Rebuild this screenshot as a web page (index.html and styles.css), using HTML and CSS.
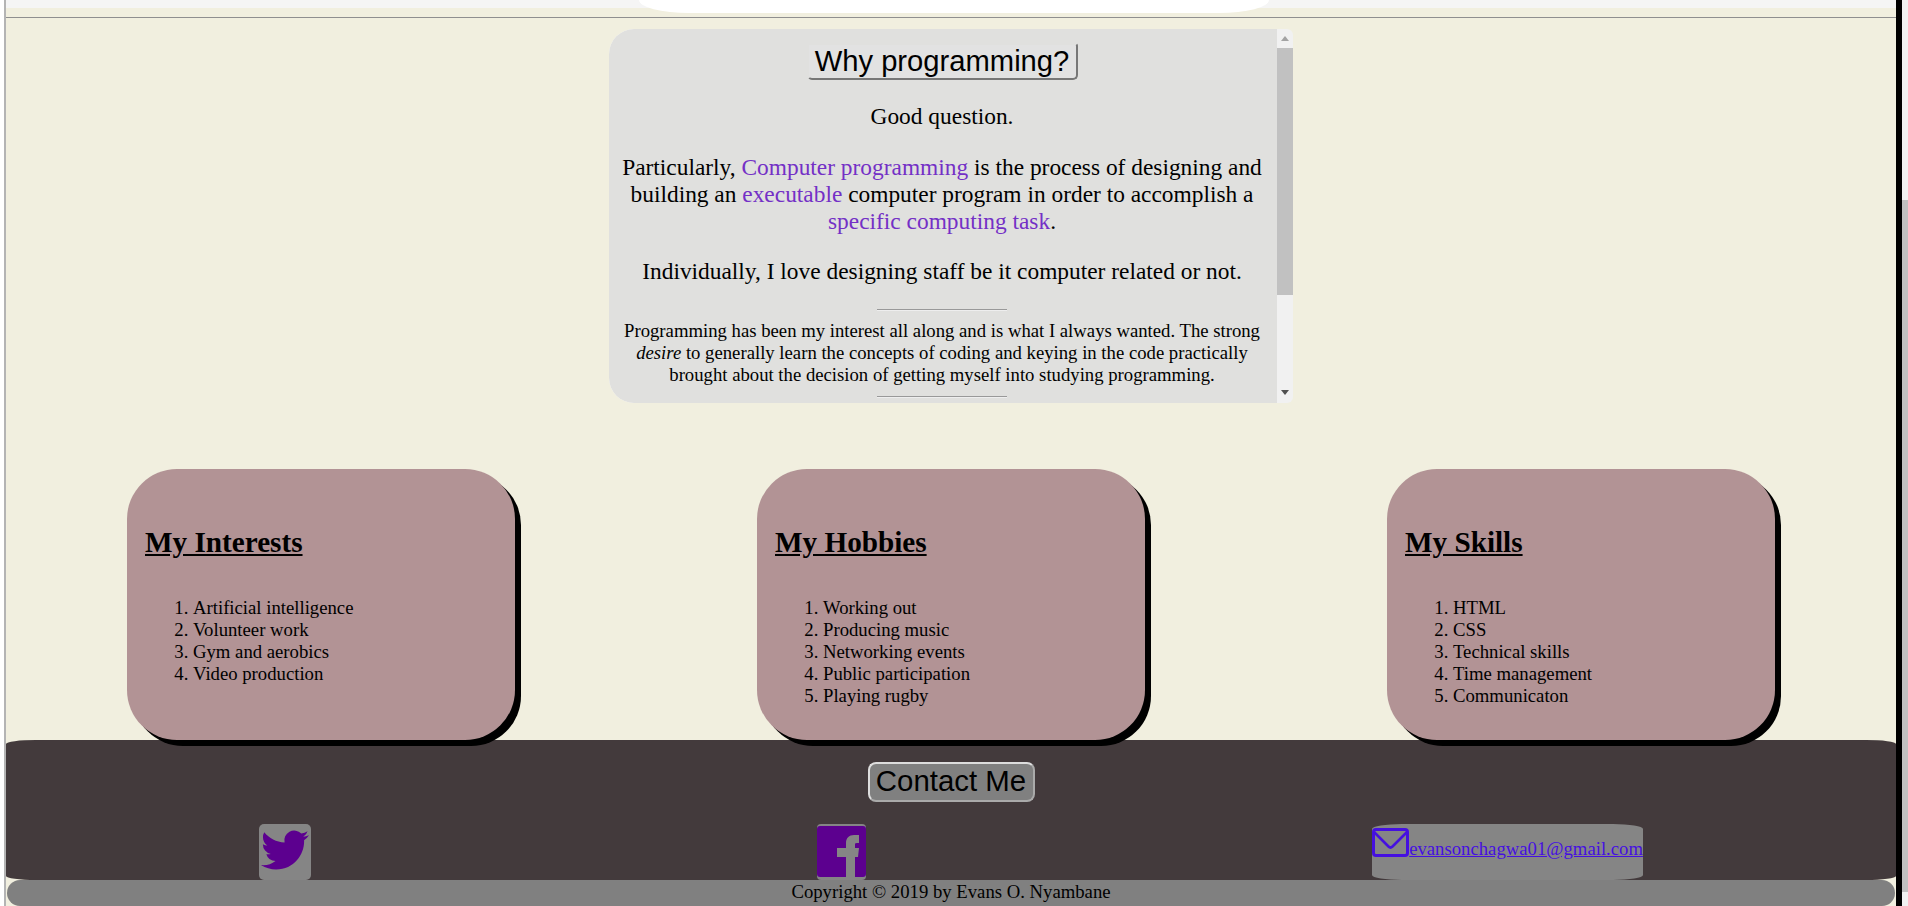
FILE: index.html
```html
<!DOCTYPE html>
<html lang="en">
<head>
  <meta charset="UTF-8">
  <meta name="viewport" content="width=device-width, initial-scale=1.0">
  <title>Evans O. Nyambane</title>
  <link rel="stylesheet" href="styles.css">
</head>
<body>
  <div id="page">
    <div class="top-bar">
      <div class="top-pill"></div>
    </div>
    <hr class="top-rule">

    <div id="why">
      <div class="why-content">
        <div class="why-title"><button class="why-button">Why programming?</button></div>
        <p>Good question.</p>
        <p>Particularly, <a href="#why">Computer programming</a> is the process of designing and building an <a href="#why">executable</a> computer program in order to accomplish a <a href="#why">specific computing task</a>.</p>
        <p>Individually, I love designing staff be it computer related or not.</p>
        <hr class="why-rule">
        <p class="why-small">Programming has been my interest all along and is what I always wanted. The strong <em>desire</em> to generally learn the concepts of coding and keying in the code practically brought about the decision of getting myself into studying programming.</p>
        <hr class="why-rule why-rule-last">
      </div>
      <!-- scrollbar of the box, headless chrome does not paint one -->
      <div class="why-bar">
        <svg class="why-arrow" width="8" height="5" viewBox="0 0 8 5"><path d="M4 0L8 5H0Z" fill="#a3a3a3"/></svg>
        <div class="why-thumb"></div>
        <svg class="why-arrow why-arrow-down" width="8" height="5" viewBox="0 0 8 5"><path d="M0 0H8L4 5Z" fill="#505050"/></svg>
      </div>
    </div>

    <div class="cards">
      <div class="card">
        <h2>My Interests</h2>
        <ol>
          <li>Artificial intelligence</li>
          <li>Volunteer work</li>
          <li>Gym and aerobics</li>
          <li>Video production</li>
        </ol>
      </div>
      <div class="card">
        <h2>My Hobbies</h2>
        <ol>
          <li>Working out</li>
          <li>Producing music</li>
          <li>Networking events</li>
          <li>Public participation</li>
          <li>Playing rugby</li>
        </ol>
      </div>
      <div class="card">
        <h2>My Skills</h2>
        <ol>
          <li>HTML</li>
          <li>CSS</li>
          <li>Technical skills</li>
          <li>Time management</li>
          <li>Communicaton</li>
        </ol>
      </div>
    </div>

    <footer>
      <div class="contact-row"><button class="contact-button">Contact Me</button></div>
      <div class="socials">
        <a class="tile tile-twitter" href="#why" aria-label="Twitter">
          <svg width="48" height="48" viewBox="0 0 24 24"><path fill="#5c008f" d="M23.953 4.57a10 10 0 01-2.825.775 4.958 4.958 0 002.163-2.723c-.951.555-2.005.959-3.127 1.184a4.92 4.92 0 00-8.384 4.482C7.69 8.095 4.067 6.13 1.64 3.162a4.822 4.822 0 00-.666 2.475c0 1.71.87 3.213 2.188 4.096a4.904 4.904 0 01-2.228-.616v.06a4.923 4.923 0 003.946 4.827 4.996 4.996 0 01-2.212.085 4.936 4.936 0 004.604 3.417 9.867 9.867 0 01-6.102 2.105c-.39 0-.779-.023-1.17-.067a13.995 13.995 0 007.557 2.209c9.053 0 13.998-7.496 13.998-13.985 0-.21 0-.42-.015-.63A9.935 9.935 0 0024 4.59z"/></svg>
        </a>
        <a class="tile tile-facebook" href="#why" aria-label="Facebook">
          <svg width="49" height="51" viewBox="0 0 49 51"><path fill="#5c008f" d="M3 0H46Q49 0 49 3V48Q49 51 46 51H38V31H41L42 22H38V18Q38 17 40 17H42V9H37C32 9 29 12 29 17V22H20V31H29V51H3Q0 51 0 48V3Q0 0 3 0Z"/></svg>
        </a>
        <div class="tile tile-mail">
          <svg width="37" height="29" viewBox="0 0 37 29"><rect x="1.5" y="1.5" width="34" height="26" rx="2.5" fill="none" stroke="#4510e0" stroke-width="3"/><path d="M2 4L16.5 18.5Q18.5 20.5 20.5 18.5L35 4" fill="none" stroke="#4510e0" stroke-width="2.6"/></svg><a href="mailto:evansonchagwa01@gmail.com">evansonchagwa01@gmail.com</a>
        </div>
      </div>
    </footer>
    <div class="copyright">Copyright © 2019 by Evans O. Nyambane</div>
  </div>
  <div class="rail"><div class="rail-thumb"></div></div>
</body>
</html>
```

FILE: styles.css
```css
html, body {
  margin: 0;
  height: 100%;
  overflow: hidden;
}

body {
  display: flex;
  background: #fff;
  font-family: "Liberation Serif", serif;
  color: #000;
}

#page {
  width: 1890px;
  height: 906px;
  margin-left: 4px;
  border-left: 2px solid #b4b4b4;
  border-right: 6px solid #000;
  background: #f1efdf;
  display: flex;
  flex-direction: column;
}

.rail {
  flex: 1;
  background: #f1f1f1;
}

.rail-thumb {
  height: 692px;
  margin-top: 200px;
  background: #c1c1c1;
}

.top-bar {
  height: 8px;
  background: #f5f5f5;
  display: flex;
  justify-content: center;
}

.top-pill {
  width: 630px;
  height: 13px;
  margin-left: 6px;
  background: #fff;
  border-radius: 0 0 50px 50px / 0 0 13px 13px;
}

.top-rule {
  margin: 9px 0 0 0;
  height: 0;
  border: none;
  border-top: 1px solid #8f8f8f;
}

#why {
  display: flex;
  flex: none;
  width: 684px;
  height: 374px;
  margin: 11px 0 0 603px;
  background: #f1f1f1;
  border-radius: 25px 6px 6px 25px;
  overflow: hidden;
}

.why-content {
  box-sizing: border-box;
  flex: 1;
  padding: 0 9px 0 7px;
  background: #e0e0de;
  border-radius: 25px 0 0 25px;
  overflow: hidden;
  text-align: center;
}

.why-bar {
  display: flex;
  flex-direction: column;
  align-items: center;
  width: 16px;
}

.why-arrow {
  flex: none;
  margin-top: 7px;
}

.why-arrow-down {
  margin: auto 0 8px 0;
}

.why-thumb {
  width: 16px;
  height: 247px;
  margin-top: 7px;
  background: #c1c1c1;
}

.why-title {
  padding-top: 14px;
}

.why-button {
  box-sizing: border-box;
  width: 271px;
  height: 37px;
  padding: 0 0 7px 0;
  font-family: "Liberation Sans", sans-serif;
  font-size: 29.2px;
  color: #000;
  background: #e2e2e2;
  border: 2px solid #e0e0de;
  border-right-color: #777;
  border-bottom-color: #777;
  border-radius: 0 3px 5px 5px;
}

.why-content p {
  margin: 1em 0;
  font-size: 23.4px;
}

.why-content a {
  color: #7430c6;
  text-decoration: none;
}

.why-content .why-small {
  margin: 0;
  font-size: 18.72px;
}

.why-rule {
  width: 130px;
  margin: 24px auto 9px auto;
  height: 0;
  border: none;
  border-top: 1px solid #999;
  border-bottom: 1px solid #eee;
}

.why-rule-last {
  margin: 10px auto 0 auto;
}

.cards {
  display: flex;
  justify-content: space-around;
  margin-top: 66px;
}

.card {
  position: relative;
  box-sizing: border-box;
  width: 388px;
  height: 271px;
  padding: 1px 18px;
  background: #b29395;
  border-radius: 50px;
  box-shadow: 6px 6px 0 #000;
}

.card h2 {
  margin: 56px 0 0 0;
  font-size: 29.2px;
  text-decoration: underline;
}

.card ol {
  margin: 38px 0 0 0;
  padding-left: 48px;
  font-size: 18.72px;
}

footer {
  box-sizing: border-box;
  height: 140px;
  padding-top: 22px;
  background: #433a3c;
  border-radius: 30px 30px 30px 30px / 4px 4px 4px 4px;
}

.contact-row {
  text-align: center;
}

.contact-button {
  box-sizing: border-box;
  width: 167px;
  height: 40px;
  padding: 0 0 2px 0;
  font-family: "Liberation Sans", sans-serif;
  font-size: 29.4px;
  color: #000;
  background: #808080;
  border: 2px solid #aaa;
  border-top-color: #ddd;
  border-left-color: #ddd;
  border-radius: 8px;
}

.socials {
  display: flex;
  justify-content: space-around;
  margin-top: 22px;
}

.tile {
  box-sizing: border-box;
  display: block;
  height: 56px;
  background: #858585;
}

.tile-twitter {
  width: 52px;
  padding: 2px;
  border-radius: 5px;
}

.tile-twitter svg,
.tile-facebook svg {
  display: block;
}

.tile-facebook {
  width: 49px;
  padding-top: 2px;
  border-radius: 4px;
}

.tile-mail {
  padding-top: 4px;
  border-radius: 30px / 5px;
  font-size: 18.72px;
}

.tile-mail svg {
  vertical-align: -2px;
}

.tile-mail a {
  color: #4510e0;
}

.copyright {
  height: 26px;
  margin: 0 1px;
  background: #808080;
  border-radius: 13px;
  text-align: center;
  font-size: 18.72px;
  line-height: 23px;
}
```
